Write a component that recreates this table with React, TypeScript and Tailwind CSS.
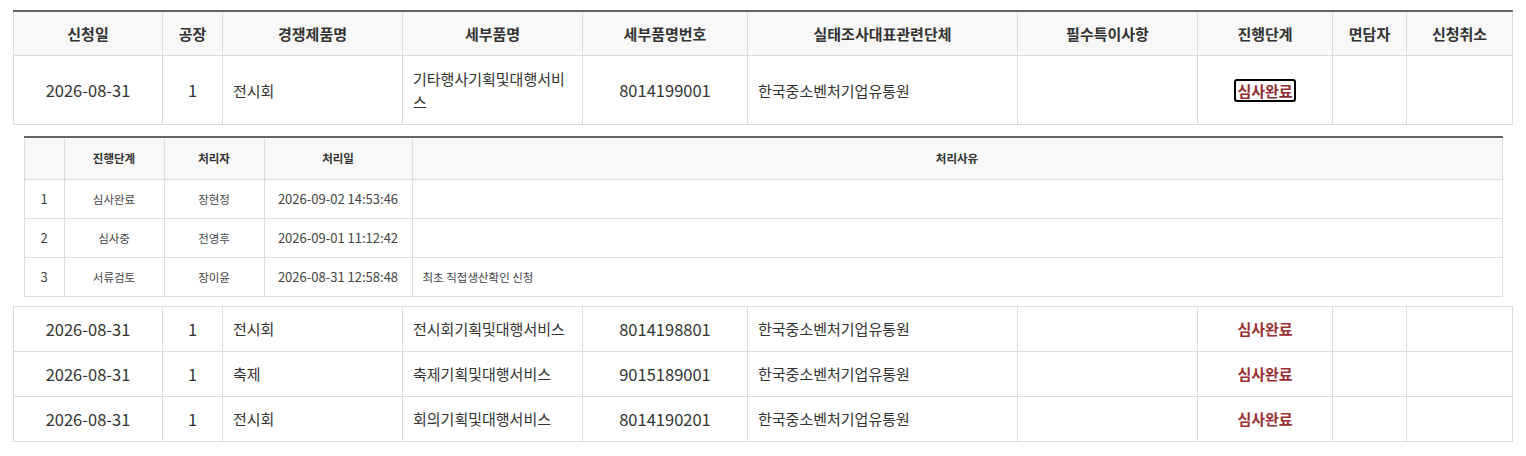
import React from "react";

type Row = {
  date: string;
  factory: string;
  product: string;
  detail: string;
  code: string;
  org: string;
  status: string;
};

const rows: Row[] = [
  { date: "2026-08-31", factory: "1", product: "전시회", detail: "전시회기획및대행서비스", code: "8014198801", org: "한국중소벤처기업유통원", status: "심사완료" },
  { date: "2026-08-31", factory: "1", product: "축제", detail: "축제기획및대행서비스", code: "9015189001", org: "한국중소벤처기업유통원", status: "심사완료" },
  { date: "2026-08-31", factory: "1", product: "전시회", detail: "회의기획및대행서비스", code: "8014190201", org: "한국중소벤처기업유통원", status: "심사완료" },
];

const history = [
  { no: "1", step: "심사완료", who: "장현정", at: "2026-09-02 14:53:46", reason: "" },
  { no: "2", step: "심사중", who: "전영후", at: "2026-09-01 11:12:42", reason: "" },
  { no: "3", step: "서류검토", who: "장이윤", at: "2026-08-31 12:58:48", reason: "최초 직접생산확인 신청" },
];

const headers = ["신청일", "공장", "경쟁제품명", "세부품명", "세부품명번호", "실태조사대표관련단체", "필수특이사항", "진행단계", "면담자", "신청취소"];

function Cols() {
  return (
    <colgroup>
      <col className="w-[149px]" />
      <col className="w-[60px]" />
      <col className="w-[180px]" />
      <col className="w-[180px]" />
      <col className="w-[165px]" />
      <col className="w-[270px]" />
      <col className="w-[180px]" />
      <col className="w-[135px]" />
      <col className="w-[74px]" />
      <col className="w-[106px]" />
    </colgroup>
  );
}

function DataCells({ r, focused }: { r: Row; focused?: boolean }) {
  const td = focused
    ? "border border-[#dcdcdc] px-[10px] py-[11px] leading-[23px] align-middle"
    : "border border-[#dcdcdc] px-[10px] py-[11px] leading-[22px] align-middle";
  return (
    <>
      <td className={`${td} text-center text-[16.5px]`}>{r.date}</td>
      <td className={`${td} text-center text-[16.5px]`}>{r.factory}</td>
      <td className={`${td} text-left text-[15px]`}>{r.product}</td>
      <td className={`${td} text-left text-[15px]`}>{r.detail}</td>
      <td className={`${td} text-center text-[16.5px]`}>{r.code}</td>
      <td className={`${td} text-left text-[15px]`}>{r.org}</td>
      <td className={td}></td>
      <td className={`${td} text-center text-[15px]`}>
        {focused ? (
          <span className="inline-block rounded-[3px] border-2 border-black px-[1px] leading-[19px] font-bold text-[#8f2d33]">{r.status}</span>
        ) : (
          <span className="font-bold text-[#9a3034]">{r.status}</span>
        )}
      </td>
      <td className={td}></td>
      <td className={td}></td>
    </>
  );
}

function HistoryTable() {
  const c = "border border-[#dedede] px-[10px] py-[10px] leading-[18px] align-middle";
  return (
    <table className="w-full table-fixed border-collapse text-[#444]">
      <colgroup>
        <col className="w-[40px]" />
        <col className="w-[100px]" />
        <col className="w-[100px]" />
        <col className="w-[148px]" />
        <col />
      </colgroup>
      <thead>
        <tr className="bg-[#f8f8f8]">
          {["", "진행단계", "처리자", "처리일", "처리사유"].map((h, i) => (
            <th key={i} className={`${c} border-t-2 border-t-[#666] py-[11px] text-center text-[11.5px] font-bold leading-[19px] text-[#333]`}>{h}</th>
          ))}
        </tr>
      </thead>
      <tbody>
        {history.map((h) => (
          <tr key={h.no}>
            <td className={`${c} text-center text-[13px]`}>{h.no}</td>
            <td className={`${c} text-center text-[11.5px]`}>{h.step}</td>
            <td className={`${c} text-center text-[11.5px]`}>{h.who}</td>
            <td className={`${c} text-center text-[13px]`}>{h.at}</td>
            <td className={`${c} text-left text-[11.5px]`}>{h.reason}</td>
          </tr>
        ))}
      </tbody>
    </table>
  );
}

export default function App() {
  return (
    <div className="min-h-[456px] w-[1526px] bg-white pt-[10px] pl-[13px] font-['Noto_Sans_CJK_KR','Noto_Sans',sans-serif] text-[#333]">
      <table className="w-[1499px] table-fixed border-collapse">
        <Cols />
        <thead>
          <tr className="bg-[#f8f8f8]">
            {headers.map((h) => (
              <th key={h} className="border border-[#dcdcdc] border-t-2 border-t-[#666] px-[6px] py-[11px] text-center text-[15px] font-bold leading-[21px] text-[#333]">
                {h}
              </th>
            ))}
          </tr>
        </thead>
        <tbody>
          <tr>
            <DataCells
              focused
              r={{ date: "2026-08-31", factory: "1", product: "전시회", detail: "기타행사기획및대행서비스", code: "8014199001", org: "한국중소벤처기업유통원", status: "심사완료" }}
            />
          </tr>
          <tr>
            <td colSpan={10} className="border-0 px-[10px] pt-[11px] pb-[9px]">
              <HistoryTable />
            </td>
          </tr>
          {rows.map((r, i) => (
            <tr key={i}>
              <DataCells r={r} />
            </tr>
          ))}
        </tbody>
      </table>
    </div>
  );
}
